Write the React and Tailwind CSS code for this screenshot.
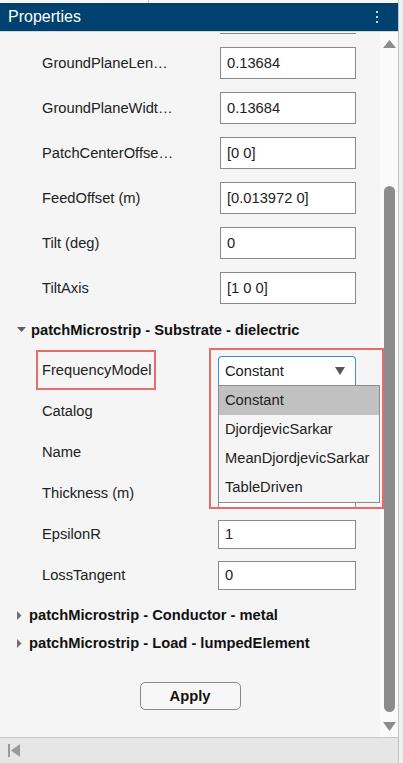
import React from "react";

const font = { fontFamily: '"Liberation Sans", Arial, sans-serif' };

const geometry = [
  ["GroundPlaneLen…", "0.13684"],
  ["GroundPlaneWidt…", "0.13684"],
  ["PatchCenterOffse…", "[0 0]"],
  ["FeedOffset (m)", "[0.013972 0]"],
  ["Tilt (deg)", "0"],
  ["TiltAxis", "[1 0 0]"],
];

const options = ["Constant", "DjordjevicSarkar", "MeanDjordjevicSarkar", "TableDriven"];

const DownCaret = () => (
  <svg width="9" height="6" viewBox="0 0 9 6" className="shrink-0">
    <polygon points="0,0 9,0 4.5,5" fill="#606060" />
  </svg>
);

const RightCaret = () => (
  <svg width="5" height="9" viewBox="0 0 5 9" className="shrink-0">
    <polygon points="0,0 4.5,4.5 0,9" fill="#707070" />
  </svg>
);

const Field = ({ label, value, width = "w-[136px]", left = "ml-[220px]" }) => (
  <div className="relative flex items-center h-full">
    <span className="absolute left-[42px] text-[#212121]">{label}</span>
    <div className={`${left} ${width} h-full bg-white border border-[#8a8a8a] flex items-center pl-[6px] text-[#212121]`}>
      {value}
    </div>
  </div>
);

const Section = ({ title, open }) => (
  <div className="flex items-center h-[24px] pl-[17px] gap-[5px] font-bold text-[#111]">
    {open ? <DownCaret /> : <RightCaret />}
    <span className={open ? "" : "ml-[2px]"}>{title}</span>
  </div>
);

export default function App() {
  return (
    <div className="flex w-[403px] h-[763px] bg-[#f0f0f0] text-[14.7px] overflow-hidden" style={font}>
      <div className="flex flex-col w-[399px] border-r border-[#c4c4c4]">
        {/* top strip */}
        <div className="h-[3px] bg-[#f7f7f7] relative">
          <div className="absolute left-[148px] top-0 h-[3px] border-l border-[#c8c8c8]" />
        </div>

        {/* title bar */}
        <div className="h-[29px] bg-[#00426f] border-b border-[#d6d6d6] flex items-center justify-between pl-[8px] pr-[20px]">
          <span className="text-white text-[16px] leading-none">Properties</span>
          <div className="flex flex-col gap-[3px]">
            <span className="w-[2px] h-[2px] bg-white rounded-full" />
            <span className="w-[2px] h-[2px] bg-white rounded-full" />
            <span className="w-[2px] h-[2px] bg-white rounded-full" />
          </div>
        </div>

        {/* body */}
        <div className="flex flex-1 min-h-0">
          <div className="relative flex-1 bg-[#f5f5f5]">
            <div className="ml-[220px] w-[136px] h-[2px] border-b border-[#8a8a8a]" />

            <div className="mt-[13px] flex flex-col gap-[13px]">
              {geometry.map(([l, v]) => (
                <div key={l} className="h-[32px]">
                  <Field label={l} value={v} />
                </div>
              ))}
            </div>

            <div className="mt-[14px]">
              <Section title="patchMicrostrip - Substrate - dielectric" open />
            </div>

            <div className="mt-[14px] flex flex-col gap-[12px]">
              {/* FrequencyModel dropdown row */}
              <div className="relative h-[29px] flex items-center">
                <span className="absolute left-[42px] text-[#212121]">
                  FrequencyModel
                  <span className="absolute left-[-6px] right-[-5px] top-[-9px] bottom-[-8px] border-2 border-[#e86a6a]" />
                </span>
                <div className="relative ml-[218px] w-[138px] h-[29px]">
                  <div className="h-full bg-white border border-[#3d8fd6] border-b-0 rounded-t-[4px] flex items-center justify-between pl-[6px] pr-[10px] text-[#212121]">
                    <span>Constant</span>
                    <svg width="10" height="8" viewBox="0 0 10 8">
                      <polygon points="0,0 10,0 5,8" fill="#555" />
                    </svg>
                  </div>
                  <div className="absolute z-20 left-0 top-[29px] w-[162px] h-[118px] bg-[#f5f5f5] border border-[#8c8c8c] text-[#212121]">
                    {options.map((o, i) => (
                      <div
                        key={o}
                        className={`h-[29px] flex items-center pl-[6px] ${i === 0 ? "bg-[#c1c1c1]" : ""}`}
                      >
                        {o}
                      </div>
                    ))}
                  </div>
                  <div className="absolute z-30 left-[-9px] top-[-8px] w-[175px] h-[161px] border-2 border-[#e86a6a] pointer-events-none" />
                </div>
              </div>
              {[
                ["Catalog", ""],
                ["Name", ""],
                ["Thickness (m)", ""],
                ["EpsilonR", "1"],
                ["LossTangent", "0"],
              ].map(([l, v]) => (
                <div key={l} className="h-[29px]">
                  <Field label={l} value={v} width="w-[138px]" left="ml-[218px]" />
                </div>
              ))}
            </div>

            <div className="mt-[13px] flex flex-col gap-[4px]">
              <Section title="patchMicrostrip - Conductor - metal" />
              <Section title="patchMicrostrip - Load - lumpedElement" />
            </div>

            <div className="mt-[27px] flex justify-center">
              <button className="w-[101px] h-[28px] rounded-[5px] border border-[#8a8a8a] bg-[#f7f7f7] font-bold text-[#111]">
                Apply
              </button>
            </div>
          </div>

          {/* scrollbar */}
          <div className="w-[18px] bg-[#fafafa] flex flex-col">
            <svg width="13" height="8" viewBox="0 0 13 8" className="ml-[3px] mt-[8px]">
              <polygon points="6.5,0 13,8 0,8" fill="#8c8c8c" />
            </svg>
            <div className="ml-[4px] mt-[138px] w-[11px] h-[526px] rounded-full bg-[#8c8c8c]" />
            <svg width="13" height="9" viewBox="0 0 13 9" className="ml-[3px] mt-[10px]">
              <polygon points="0,0 13,0 6.5,9" fill="#8c8c8c" />
            </svg>
          </div>
        </div>

        {/* bottom bar */}
        <div className="h-[26px] bg-[#e6e6e6] border-t border-[#c6c6c6] flex items-center pl-[8px]">
          <svg width="12" height="13" viewBox="0 0 12 13">
            <rect x="0" y="0" width="2" height="13" fill="#9a9a9a" />
            <polygon points="12,0 12,13 3,6.5" fill="#9a9a9a" />
          </svg>
        </div>
      </div>
      <div className="flex-1 bg-[#f0f0f0]" />
    </div>
  );
}
